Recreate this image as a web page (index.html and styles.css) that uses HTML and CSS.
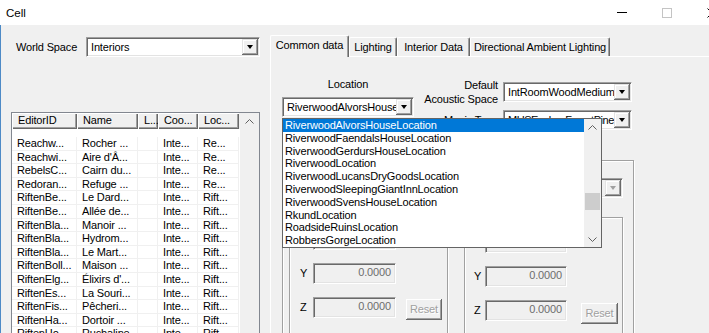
FILE: index.html
```html
<!DOCTYPE html>
<html lang="fr">
<head>
  <meta charset="UTF-8">
  <title>Cell</title>
  <link rel="stylesheet" href="styles.css">
</head>
<body>
  <div class="titlebar">
    <span class="title">Cell</span>
    <div class="caption">
      <span class="cap-btn"><span class="min-glyph"></span></span>
      <span class="cap-btn"><span class="max-glyph"></span></span>
      <span class="cap-btn">
        <svg width="10" height="10" viewBox="0 0 10 10"><path d="M0.5 0.5L9.5 9.5M9.5 0.5L0.5 9.5" stroke="#000" stroke-width="1"/></svg>
      </span>
    </div>
  </div>

  <div class="client">
    <div class="left-pane">
      <div class="ws-row">
        <span class="ws-label">World Space</span>
        <div class="combo ws-combo">
          <span class="combo-text">Interiors</span>
          <span class="combo-btn"><i class="tri"></i></span>
        </div>
      </div>

      <div class="listview">
        <div class="lv-main">
          <div class="lv-head">
            <div class="lv-th">EditorID</div>
            <div class="lv-th">Name</div>
            <div class="lv-th">L...</div>
            <div class="lv-th">Coo...</div>
            <div class="lv-th">Loc...</div>
          </div>
          <div class="lv-rows">
            <div class="lv-row"><span>Reachw...</span><span>Rocher ...</span><span></span><span>Inte...</span><span>Re...</span></div>
            <div class="lv-row"><span>Reachwi...</span><span>Aire d'Â...</span><span></span><span>Inte...</span><span>Re...</span></div>
            <div class="lv-row"><span>RebelsC...</span><span>Cairn du...</span><span></span><span>Inte...</span><span>Re...</span></div>
            <div class="lv-row"><span>Redoran...</span><span>Refuge ...</span><span></span><span>Inte...</span><span>Re...</span></div>
            <div class="lv-row"><span>RiftenBe...</span><span>Le Dard...</span><span></span><span>Inte...</span><span>Rift...</span></div>
            <div class="lv-row"><span>RiftenBe...</span><span>Allée de...</span><span></span><span>Inte...</span><span>Rift...</span></div>
            <div class="lv-row"><span>RiftenBla...</span><span>Manoir ...</span><span></span><span>Inte...</span><span>Rift...</span></div>
            <div class="lv-row"><span>RiftenBla...</span><span>Hydrom...</span><span></span><span>Inte...</span><span>Rift...</span></div>
            <div class="lv-row"><span>RiftenBla...</span><span>Le Mart...</span><span></span><span>Inte...</span><span>Rift...</span></div>
            <div class="lv-row"><span>RiftenBoll...</span><span>Maison ...</span><span></span><span>Inte...</span><span>Rift...</span></div>
            <div class="lv-row"><span>RiftenElg...</span><span>Élixirs d'...</span><span></span><span>Inte...</span><span>Rift...</span></div>
            <div class="lv-row"><span>RiftenEs...</span><span>La Souri...</span><span></span><span>Inte...</span><span>Rift...</span></div>
            <div class="lv-row"><span>RiftenFis...</span><span>Pêcheri...</span><span></span><span>Inte...</span><span>Rift...</span></div>
            <div class="lv-row"><span>RiftenHa...</span><span>Dortoir ...</span><span></span><span>Inte...</span><span>Rift...</span></div>
            <div class="lv-row"><span>RiftenHo...</span><span>Ruchaline...</span><span></span><span>Inte...</span><span>Rift...</span></div>
          </div>
        </div>
        <div class="lv-scroll">
          <svg width="9" height="5" viewBox="0 0 9 5"><polyline points="0.5,4.5 4.5,0.5 8.5,4.5" fill="none" stroke="#606060"/></svg>
        </div>
      </div>
    </div>

    <div class="right-pane">
      <div class="tabs">
        <div class="tab active tab-common">Common data</div>
        <div class="tab tab-lighting">Lighting</div>
        <div class="tab tab-interior">Interior Data</div>
        <div class="tab tab-ambient">Directional Ambient Lighting</div>
      </div>

      <div class="tab-page">
        <div class="top-row">
          <div class="loc-col">
            <div class="loc-label">Location</div>
            <div class="combo loc-combo">
              <span class="combo-text">RiverwoodAlvorsHouseLocation</span>
              <span class="combo-btn"><i class="tri"></i></span>
            </div>
          </div>
          <div class="props">
            <div class="prop-label">Default<br>Acoustic Space</div>
            <div class="combo">
              <span class="combo-text">IntRoomWoodMedium</span>
              <span class="combo-btn"><i class="tri"></i></span>
            </div>
            <div class="prop-label">Music Type</div>
            <div class="combo">
              <span class="combo-text music-text">MUSExploreForestPine</span>
              <span class="combo-btn"><i class="tri"></i></span>
            </div>
          </div>
        </div>

        <div class="group outer-group">
          <div class="tmpl-row">
            <div class="combo combo-disabled">
              <span class="combo-text"></span>
              <span class="combo-btn"><i class="tri"></i></span>
            </div>
          </div>
          <div class="inner-groups">
            <div class="group pos-group">
              <div class="pos-row"><span class="axis">X</span><div class="field">0.0000</div></div>
              <div class="pos-row"><span class="axis">Y</span><div class="field">0.0000</div></div>
              <div class="pos-row"><span class="axis">Z</span><div class="field">0.0000</div><div class="btn-reset">Reset</div></div>
            </div>
            <div class="group pos-group rot-group">
              <div class="pos-row"><span class="axis">X</span><div class="field">0.0000</div></div>
              <div class="pos-row"><span class="axis">Y</span><div class="field">0.0000</div></div>
              <div class="pos-row"><span class="axis">Z</span><div class="field">0.0000</div><div class="btn-reset">Reset</div></div>
            </div>
          </div>
        </div>

        <div class="droplist">
          <div class="dl-items">
            <div class="dl-item sel">RiverwoodAlvorsHouseLocation</div>
            <div class="dl-item">RiverwoodFaendalsHouseLocation</div>
            <div class="dl-item">RiverwoodGerdursHouseLocation</div>
            <div class="dl-item">RiverwoodLocation</div>
            <div class="dl-item">RiverwoodLucansDryGoodsLocation</div>
            <div class="dl-item">RiverwoodSleepingGiantInnLocation</div>
            <div class="dl-item">RiverwoodSvensHouseLocation</div>
            <div class="dl-item">RkundLocation</div>
            <div class="dl-item">RoadsideRuinsLocation</div>
            <div class="dl-item">RobbersGorgeLocation</div>
          </div>
          <div class="dl-scroll">
            <div class="sb-arrow">
              <svg width="9" height="5" viewBox="0 0 9 5"><polyline points="0.5,4.5 4.5,0.5 8.5,4.5" fill="none" stroke="#606060"/></svg>
            </div>
            <div class="sb-track"><div class="sb-thumb"></div></div>
            <div class="sb-arrow">
              <svg width="9" height="5" viewBox="0 0 9 5"><polyline points="0.5,0.5 4.5,4.5 8.5,0.5" fill="none" stroke="#606060"/></svg>
            </div>
          </div>
        </div>
      </div>
    </div>
  </div>
</body>
</html>
```

FILE: styles.css
```css
* {
  margin: 0;
  padding: 0;
  box-sizing: border-box;
}
body {
  width: 709px;
  height: 333px;
  overflow: hidden;
  background: #f0f0f0;
  color: #000;
  font-family: 'Liberation Sans', Arial, sans-serif;
  font-size: 11px;
  letter-spacing: -0.15px;
}

/* title bar */
.titlebar {
  height: 25px;
  background: #fff;
  display: flex;
  align-items: center;
  justify-content: space-between;
}
.title {
  padding-left: 6px;
  font-size: 11.5px;
  letter-spacing: 0;
}
.caption {
  display: flex;
  margin-right: -25px;
}
.cap-btn {
  width: 45px;
  height: 25px;
  display: flex;
  align-items: center;
  justify-content: center;
}
.min-glyph {
  width: 10px;
  height: 1px;
  background: #000;
}
.max-glyph {
  width: 10px;
  height: 10px;
  border: 1px solid #c4c4c4;
}

/* client */
.client {
  display: flex;
  height: 308px;
  border-left: 1px solid #4d8ac6;
}
.left-pane {
  width: 269px;
  padding: 12px 0 0 10px;
}
.ws-row {
  display: flex;
  align-items: center;
  height: 20px;
}
.ws-label {
  width: 75px;
  padding-left: 5px;
}
.ws-combo {
  width: 174px;
}

/* combo box */
.combo {
  height: 20px;
  display: flex;
  align-items: center;
  background: #fff;
  border: 1px solid;
  border-color: #a0a0a0 #fff #fff #a0a0a0;
  box-shadow: inset 1px 1px #696969, inset -1px -1px #e3e3e3;
  padding: 1px;
}
.combo-text {
  flex: 1;
  overflow: hidden;
  white-space: nowrap;
  padding-left: 3px;
  line-height: 16px;
}
.music-text {
  letter-spacing: -0.45px;
}
.combo-btn {
  width: 16px;
  height: 16px;
  background: #f0f0f0;
  box-shadow: inset -1px -1px #696969, inset 1px 1px #e3e3e3, inset -2px -2px #a0a0a0, inset 2px 2px #fff;
  display: flex;
  align-items: center;
  justify-content: center;
}
.tri {
  width: 0;
  height: 0;
  border-left: 3.5px solid transparent;
  border-right: 3.5px solid transparent;
  border-top: 4px solid #000;
}
.combo-disabled {
  background: #f0f0f0;
}
.combo-disabled .tri {
  border-top-color: #a0a0a0;
}

/* list view */
.listview {
  margin-top: 55px;
  width: 249px;
  height: 230px;
  display: flex;
  border: 1px solid #828790;
  background: #fff;
}
.lv-main {
  flex: 1;
}
.lv-head,
.lv-row {
  display: grid;
  grid-template-columns: 65px 61px 20px 40px 41px;
}
.lv-head {
  height: 16px;
  background: #f0f0f0;
}
.lv-th {
  line-height: 15px;
  padding-left: 6px;
  white-space: nowrap;
  overflow: hidden;
  box-shadow: inset 1px 1px #fff, inset -1px -1px #696969, inset -2px -2px #a0a0a0;
}
.lv-rows {
  padding-top: 8px;
}
.lv-row {
  height: 13.6px;
  line-height: 13px;
}
.lv-row span {
  padding-left: 5px;
  white-space: nowrap;
  overflow: hidden;
  border-right: 1px solid #f0f0f0;
  border-bottom: 1px solid #f0f0f0;
}
.lv-scroll {
  width: 19px;
  background: #f0f0f0;
  display: flex;
  justify-content: center;
  padding-top: 6px;
}

/* tabs */
.right-pane {
  flex: 1;
  padding-top: 10px;
  display: flex;
  flex-direction: column;
}
.tabs {
  display: flex;
  align-items: flex-end;
  height: 21px;
}
.tab {
  height: 19px;
  line-height: 18px;
  text-align: center;
  white-space: nowrap;
  border-top: 1px solid #fff;
  border-left: 1px solid #fff;
  border-right: 1px solid #696969;
  box-shadow: inset -1px 0 #a0a0a0;
  border-radius: 2px 2px 0 0;
}
.tab.active {
  height: 22px;
  margin-bottom: -1px;
  line-height: 19px;
  background: #f0f0f0;
  position: relative;
  z-index: 1;
}
.tab-common { width: 79px; }
.tab-lighting { width: 48px; }
.tab-interior { width: 73px; }
.tab-ambient { width: 140px; }

.tab-page {
  flex: 1;
  position: relative;
  border-top: 1px solid #fff;
  border-left: 1px solid #fff;
  padding-left: 11px;
}
.top-row {
  display: flex;
}
.loc-col {
  width: 132px;
}
.loc-label {
  height: 13px;
  line-height: 13px;
  margin: 21px 0 6px;
  text-align: center;
}
.props {
  margin: 21px 0 0 4px;
  display: grid;
  grid-template-columns: 80px 129px;
  column-gap: 5px;
  row-gap: 4px;
  align-items: center;
}
.prop-label {
  text-align: right;
  line-height: 14px;
}

/* group boxes */
.group {
  border: 1px solid #a0a0a0;
  box-shadow: inset 1px 1px #fff, 1px 1px 0 #fff;
}
.outer-group {
  margin-top: 30px;
  width: 352px;
  height: 200px;
  padding: 17px 10px 0 6px;
}
.tmpl-row {
  display: flex;
  justify-content: flex-end;
}
.tmpl-row .combo {
  width: 180px;
}
.inner-groups {
  display: flex;
  gap: 16px;
  margin-top: 19px;
}
.pos-group {
  width: 161px;
  height: 140px;
  padding: 11px 0 0 10px;
}
.rot-group {
  padding: 14px 0 0 9px;
}
.pos-row {
  display: flex;
  align-items: flex-start;
  height: 21px;
  margin-bottom: 13px;
}
.axis {
  width: 13px;
  line-height: 21px;
}
.rot-group .axis {
  width: 11px;
}
.field {
  width: 83px;
  height: 21px;
  line-height: 17px;
  text-align: right;
  padding-right: 4px;
  color: #6d6d6d;
  background: #f0f0f0;
  border: 1px solid;
  border-color: #a0a0a0 #fff #fff #a0a0a0;
  box-shadow: inset 1px 1px #696969, inset -1px -1px #e3e3e3;
}
.rot-group .field {
  width: 82px;
}
.btn-reset {
  width: 36px;
  height: 21px;
  margin: 2px 0 0 10px;
  line-height: 20px;
  text-align: center;
  color: #a0a0a0;
  text-shadow: 1px 1px #fff;
  box-shadow: inset -1px -1px #696969, inset 1px 1px #fff, inset -2px -2px #a0a0a0;
}
.rot-group .btn-reset {
  width: 37px;
  margin: 3px 0 0 14px;
}

/* open dropdown */
.droplist {
  position: absolute;
  left: 11px;
  top: 61px;
  width: 320px;
  height: 130px;
  border: 1px solid #646464;
  background: #fff;
  display: flex;
  z-index: 5;
}
.dl-items {
  flex: 1;
}
.dl-item {
  height: 12.8px;
  line-height: 13px;
  padding-left: 2px;
  white-space: nowrap;
}
.dl-item.sel {
  background: #0078d7;
  color: #fff;
}
.dl-scroll {
  width: 17px;
  background: #f0f0f0;
  display: flex;
  flex-direction: column;
}
.sb-arrow {
  height: 16px;
  display: flex;
  align-items: center;
  justify-content: center;
}
.sb-track {
  flex: 1;
  padding-top: 58px;
}
.sb-thumb {
  height: 17px;
  margin: 0 1px;
  background: #cdcdcd;
}
```
